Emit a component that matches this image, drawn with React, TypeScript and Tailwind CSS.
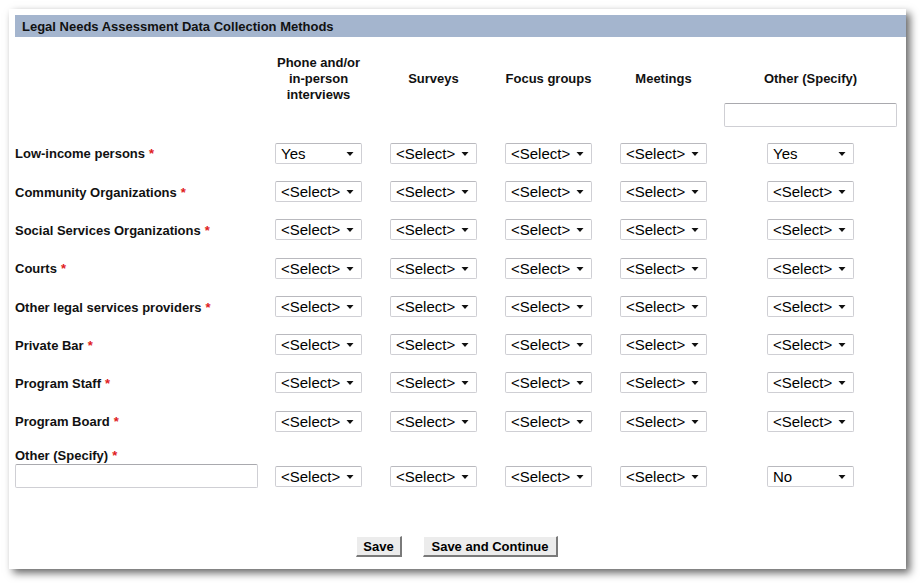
import React from 'react';

const rows: { label: string; values: string[] }[] = [
  { label: 'Low-income persons', values: ['Yes', '<Select>', '<Select>', '<Select>', 'Yes'] },
  { label: 'Community Organizations', values: ['<Select>', '<Select>', '<Select>', '<Select>', '<Select>'] },
  { label: 'Social Services Organizations', values: ['<Select>', '<Select>', '<Select>', '<Select>', '<Select>'] },
  { label: 'Courts', values: ['<Select>', '<Select>', '<Select>', '<Select>', '<Select>'] },
  { label: 'Other legal services providers', values: ['<Select>', '<Select>', '<Select>', '<Select>', '<Select>'] },
  { label: 'Private Bar', values: ['<Select>', '<Select>', '<Select>', '<Select>', '<Select>'] },
  { label: 'Program Staff', values: ['<Select>', '<Select>', '<Select>', '<Select>', '<Select>'] },
  { label: 'Program Board', values: ['<Select>', '<Select>', '<Select>', '<Select>', '<Select>'] },
];

const lastValues = ['<Select>', '<Select>', '<Select>', '<Select>', 'No'];

const gridCols = 'grid grid-cols-[246px_115px_115px_115px_115px_179px]';

const FakeSelect: React.FC<{ value: string }> = ({ value }) => (
  <div className="relative flex h-[21px] w-[87px] items-center rounded-[2px] border border-[#cfcfd4] border-t-[#b9b9be] bg-white pl-[5px] text-[15px] font-normal leading-none text-black">
    <span>{value}</span>
    <svg className="absolute right-[7px] top-[8px]" width="8" height="5" viewBox="0 0 8 5">
      <path d="M0.5 0 H7.5 L4 4 Z" fill="#111" />
    </svg>
  </div>
);

const TextBox: React.FC<{ className?: string }> = ({ className }) => (
  <div className={`rounded-[2px] border border-[#cfcfd4] border-t-[#a9a9ae] bg-white ${className ?? ''}`} />
);

const Req = () => <span className="ml-[4px] text-[#e0201c]">*</span>;

export default function App() {
  return (
    <div className="h-[583px] w-[920px] bg-white pl-[9px] pt-[9px] font-['Liberation_Sans',Arial,sans-serif] text-[13px] text-[#111]">
      <div className="h-[560px] w-[897px] bg-white pl-[6px] pt-[6px] shadow-[4px_4px_8px_rgba(0,0,0,0.6)]">
        <div className="flex h-[22px] items-center bg-[#a4b5ce] pl-[7px] pt-[2px] font-bold">
          Legal Needs Assessment Data Collection Methods
        </div>

        {/* column headings */}
        <div className={`${gridCols} mt-[18px] font-bold leading-[16px]`}>
          <div />
          <div className="flex h-[48px] items-center justify-center text-center">
            Phone and/or
            <br />
            in-person
            <br />
            interviews
          </div>
          <div className="flex h-[48px] items-center justify-center">Surveys</div>
          <div className="flex h-[48px] items-center justify-center">Focus groups</div>
          <div className="flex h-[48px] items-center justify-center">Meetings</div>
          <div className="flex h-[48px] items-center justify-center">Other (Specify)</div>
        </div>
        <div className={`${gridCols} mb-[7px]`}>
          <div />
          <div />
          <div />
          <div />
          <div />
          <div className="pl-[3px]">
            <TextBox className="h-[24px] w-[173px]" />
          </div>
        </div>

        {rows.map((r) => (
          <div key={r.label} className={`${gridCols} h-[38.3px] items-center`}>
            <div className="pt-[2px] font-bold">
              {r.label}
              <Req />
            </div>
            {r.values.map((v, i) => (
              <div key={i} className="flex justify-center">
                <FakeSelect value={v} />
              </div>
            ))}
          </div>
        ))}

        <div className={`${gridCols} h-[50px] items-start`}>
          <div className="pt-[8px]">
            <div className="font-bold leading-[16px]">
              Other (Specify)
              <Req />
            </div>
            <TextBox className="h-[24px] w-[243px]" />
          </div>
          {lastValues.map((v, i) => (
            <div key={i} className="flex justify-center pt-[26px]">
              <FakeSelect value={v} />
            </div>
          ))}
        </div>

        <div className="mt-[46px] flex gap-[21px] pl-[341px]">
          <button className="h-[21px] w-[46px] border-l border-t border-white border-b-2 border-r-2 border-b-[#7a7a7a] border-r-[#7a7a7a] bg-[#ececec] text-[13px] font-bold leading-none text-black">
            Save
          </button>
          <button className="h-[21px] w-[135px] border-l border-t border-white border-b-2 border-r-2 border-b-[#7a7a7a] border-r-[#7a7a7a] bg-[#ececec] text-[13px] font-bold leading-none text-black">
            Save and Continue
          </button>
        </div>
      </div>
    </div>
  );
}
